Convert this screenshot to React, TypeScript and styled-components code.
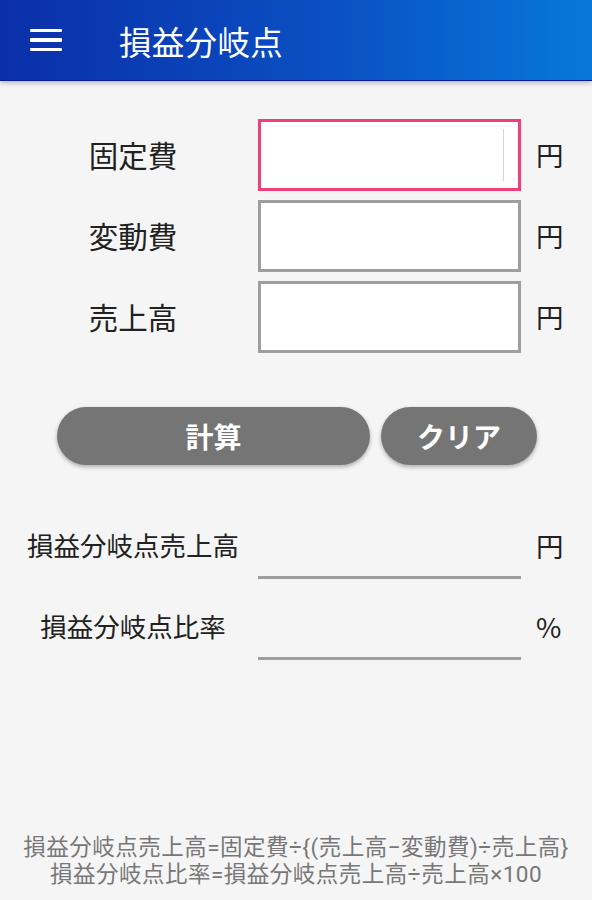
import React from "react";
import styled, { createGlobalStyle } from "styled-components";

const GlobalStyle = createGlobalStyle`
  html, body {
    margin: 0;
    padding: 0;
    background: #f5f5f5;
  }
  body {
    font-family: "Noto Sans CJK JP", "Noto Sans", Roboto, sans-serif;
    color: #212121;
  }
  * {
    box-sizing: border-box;
  }
`;

const Page = styled.div`
  display: flex;
  flex-direction: column;
  min-height: 100vh;
`;

const AppBar = styled.header`
  height: 81px;
  display: flex;
  align-items: center;
  padding-left: 30px;
  background: linear-gradient(90deg, #0a2fa9 0%, #0b4fc3 55%, #0678dc 100%);
  border-bottom: 1px solid #0820a0;
  box-shadow: 0 2px 5px rgba(0, 0, 0, 0.25);
  color: #fff;
`;

const MenuButton = styled.div`
  width: 32px;
  display: flex;
  flex-direction: column;
  gap: 6px;
  margin-right: 57px;

  span {
    display: block;
    height: 3.5px;
    background: #fff;
    border-radius: 1px;
  }
`;

const Title = styled.h1`
  margin: 0;
  font-size: 32.5px;
  font-weight: 400;
  letter-spacing: 0.3px;
`;

const Form = styled.div`
  display: flex;
  flex-direction: column;
  gap: 9px;
  margin-top: 38px;
`;

const Row = styled.div<{ $tall?: boolean }>`
  display: grid;
  grid-template-columns: 250px 263px 1fr;
  padding-left: 8px;
  align-items: center;
  height: ${(p) => (p.$tall ? "67px" : "72px")};
`;

const Label = styled.div<{ $size?: number }>`
  text-align: center;
  font-size: ${(p) => p.$size ?? 29.5}px;
  line-height: 1;
`;

const Unit = styled.div`
  padding-left: 15px;
  font-size: 27.5px;
  line-height: 1;
`;

const InputBox = styled.div<{ $focused?: boolean }>`
  position: relative;
  height: 72px;
  background: #fff;
  border: 3px solid ${(p) => (p.$focused ? "#ef3f7d" : "#9e9e9e")};

  input {
    width: 100%;
    height: 100%;
    border: none;
    outline: none;
    background: transparent;
    font: inherit;
    font-size: 26px;
    padding: 0 10px;
  }
`;

const Caret = styled.span`
  position: absolute;
  right: 14px;
  top: 7px;
  bottom: 7px;
  width: 1px;
  background: #f7c5d6;
`;

const Result = styled.div`
  height: 67px;
  border-bottom: 3px solid #9e9e9e;
`;

const Buttons = styled.div`
  display: flex;
  gap: 11px;
  padding-left: 57px;
  margin-top: 54px;
`;

const PillButton = styled.button<{ $width: number }>`
  width: ${(p) => p.$width}px;
  height: 58px;
  border: none;
  border-radius: 29px;
  background: #757575;
  color: #fff;
  font-family: inherit;
  font-size: 28px;
  font-weight: 700;
  box-shadow: 0 2px 4px rgba(0, 0, 0, 0.3);
  cursor: pointer;
`;

const Results = styled.div`
  display: flex;
  flex-direction: column;
  gap: 14px;
  margin-top: 47px;
`;

const Formula = styled.footer`
  margin-top: auto;
  padding-bottom: 12px;
  text-align: center;
  font-family: Roboto, "Noto Sans CJK JP", sans-serif;
  font-size: 22.5px;
  letter-spacing: 0.5px;
  line-height: 27px;
  color: #777;
`;

const inputs = [
  { label: "固定費", focused: true },
  { label: "変動費" },
  { label: "売上高" },
];

const outputs = [
  { label: "損益分岐点売上高", unit: "円" },
  { label: "損益分岐点比率", unit: "%" },
];

export default function App() {
  return (
    <Page>
      <GlobalStyle />
      <AppBar>
        <MenuButton>
          <span />
          <span />
          <span />
        </MenuButton>
        <Title>損益分岐点</Title>
      </AppBar>

      <Form>
        {inputs.map((item) => (
          <Row key={item.label}>
            <Label>{item.label}</Label>
            <InputBox $focused={item.focused}>
              <input type="text" inputMode="numeric" />
              {item.focused && <Caret />}
            </InputBox>
            <Unit>円</Unit>
          </Row>
        ))}
      </Form>

      <Buttons>
        <PillButton $width={313}>計算</PillButton>
        <PillButton $width={156}>クリア</PillButton>
      </Buttons>

      <Results>
        {outputs.map((item) => (
          <Row key={item.label} $tall>
            <Label $size={26.5}>{item.label}</Label>
            <Result />
            <Unit>{item.unit}</Unit>
          </Row>
        ))}
      </Results>

      <Formula>
        損益分岐点売上高=固定費÷{"{"}(売上高−変動費)÷売上高{"}"}
        <br />
        損益分岐点比率=損益分岐点売上高÷売上高×100
      </Formula>
    </Page>
  );
}
